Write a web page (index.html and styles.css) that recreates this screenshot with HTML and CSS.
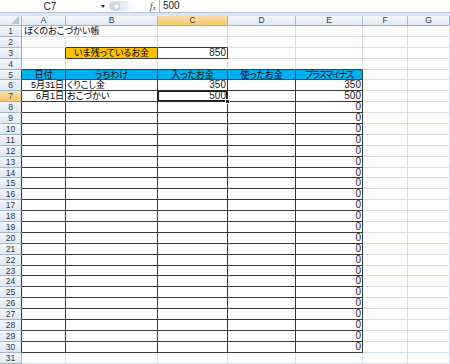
FILE: index.html
```html
<!DOCTYPE html>
<html lang="ja">
<head>
    <meta charset="UTF-8">
    <title>ぼくのおこづかい帳</title>
    <link rel="stylesheet" href="styles.css">
</head>
<body>
    <!-- Formula bar -->
    <div class="formula-bar">
        <div class="name-box">C7</div>
        <div class="name-arrow"></div>
        <div class="grip"><span class="grip-dot"></span></div>
        <div class="fx"><i>f</i><small>x</small></div>
        <div class="formula">500</div>
    </div>
    <div class="band"></div>

    <!-- Worksheet -->
    <div class="sheet" id="sheet">
        <div class="corner"><svg width="8" height="8" viewBox="0 0 8 8"><polygon points="8,0 8,8 0,8" fill="#b6c6da"/></svg></div>
        <div class="ch">A</div>
        <div class="ch">B</div>
        <div class="ch sel">C</div>
        <div class="ch">D</div>
        <div class="ch">E</div>
        <div class="ch">F</div>
        <div class="ch">G</div>

        <div class="rh">1</div>
        <div class="c title">ぼくのおこづかい帳</div>
        <div class="c"></div><div class="c"></div><div class="c"></div><div class="c"></div><div class="c"></div>

        <div class="rh">2</div>
        <div class="c"></div><div class="c bb"></div><div class="c bb"></div>
        <div class="c"></div><div class="c"></div><div class="c"></div><div class="c"></div>

        <div class="rh">3</div>
        <div class="c br"></div>
        <div class="c t gold ctr">いま残っているお金</div>
        <div class="c t r n">850</div>
        <div class="c"></div><div class="c"></div><div class="c"></div><div class="c"></div>

        <div class="rh">4</div>
        <div class="c bb"></div><div class="c bb"></div><div class="c bb"></div><div class="c bb"></div><div class="c bb"></div>
        <div class="c"></div><div class="c"></div>

        <div class="rh rt">5</div>
        <div class="c t head">日付</div>
        <div class="c t head">うちわけ</div>
        <div class="c t head">入ったお金</div>
        <div class="c t head">使ったお金</div>
        <div class="c t head narrow">プラスマイナス</div>
        <div class="c"></div><div class="c"></div>

        <div class="rh rt">6</div>
        <div class="c t r">5月31日</div>
        <div class="c t">くりこし金</div>
        <div class="c t r n">350</div>
        <div class="c t"></div>
        <div class="c t r n">350</div>
        <div class="c"></div><div class="c"></div>

        <div class="rh rt sel">7</div>
        <div class="c t r">6月1日</div>
        <div class="c t">おこづかい</div>
        <div class="c t r n active">500</div>
        <div class="c t"></div>
        <div class="c t r n">500</div>
        <div class="c"></div><div class="c"></div>
    </div>

    <script>
        // Empty rows of the ledger, 8 to 31
        const sheet = document.getElementById('sheet');
        for (let r = 8; r <= 31; r++) {
            const t = r <= 30 ? ' t' : '';
            let html = '<div class="rh' + (r <= 30 ? ' rt' : '') + '">' + r + '</div>';
            html += '<div class="c' + t + '"></div>';
            html += '<div class="c' + t + '"></div>';
            html += '<div class="c' + t + '"></div>';
            html += '<div class="c' + t + '"></div>';
            html += '<div class="c r n' + t + '">' + (r <= 30 ? '0' : '') + '</div>';
            html += '<div class="c"></div><div class="c"></div>';
            sheet.insertAdjacentHTML('beforeend', html);
        }
    </script>
</body>
</html>
```

FILE: styles.css
```css
body {
    margin: 0;
    background: #fff;
    font-family: "Liberation Sans", "Noto Sans CJK JP", sans-serif;
    overflow: hidden;
}
.formula-bar {
    display: flex;
    align-items: center;
    height: 12px;
    border-bottom: 1px solid #b4c4d8;
    font-size: 10px;
    color: #222;
}
.name-box {
    width: 100px;
    text-align: center;
}
.name-arrow {
    width: 0;
    height: 0;
    margin: 0 4px 0 1px;
    border-left: 2px solid transparent;
    border-right: 2px solid transparent;
    border-top: 3px solid #222;
}
.grip {
    width: 26px;
    height: 10px;
    border-radius: 5px 0 0 5px;
    background: linear-gradient(90deg, #c9d5e4, #e8eef6 60%, #fff);
    display: flex;
    align-items: center;
    padding-left: 4px;
    box-sizing: border-box;
}
.grip-dot {
    width: 5px;
    height: 5px;
    border-radius: 50%;
    background: #fff;
    border: 1px solid #a9b9cc;
}
.fx {
    width: 21px;
    text-align: right;
    padding-right: 3px;
    font-family: "Liberation Serif", serif;
    font-size: 10px;
    color: #555;
}
.fx small {
    font-size: 7px;
}
.formula {
    flex: 1;
    height: 12px;
    line-height: 12px;
    border-left: 1px solid #a8b8cc;
    padding-left: 3px;
}
.band {
    height: 3px;
    background: #dbe5f3;
}
.sheet {
    display: grid;
    grid-template-columns: 22px 44px 92px 70px 68px 67px 45px 42px;
    grid-template-rows: 10px repeat(31, 10.9px);
    font-size: 9px;
    line-height: 10px;
    color: #000;
    font-feature-settings: "palt";
}
.sheet > div {
    box-sizing: border-box;
    white-space: nowrap;
}
.corner, .ch, .rh {
    background: linear-gradient(#f4f7fb, #dfe7f2);
    border-right: 1px solid #9eb6ce;
    border-bottom: 1px solid #9eb6ce;
    color: #2e3a4a;
    font-size: 8.5px;
    text-align: center;
}
.corner {
    display: flex;
    align-items: flex-end;
    justify-content: flex-end;
    padding: 0 2px 1px 0;
}
.corner svg {
    display: block;
}
.ch {
    line-height: 9px;
}
.rh {
    line-height: 10px;
}
.ch.sel, .rh.sel {
    background: linear-gradient(#fbe0ac, #f5c46c);
    border-color: #e2a64d;
}
.rh.rt {
    border-right-color: #3a3a3a;
}
.c {
    border-right: 1px solid #d6dde8;
    border-bottom: 1px solid #d6dde8;
    padding: 0 1px;
}
.title {
    grid-column: span 2;
    padding-left: 2px;
}
.bb {
    border-bottom-color: #3a3a3a;
}
.br {
    border-right-color: #3a3a3a;
}
.t {
    border-right-color: #3a3a3a;
    border-bottom-color: #3a3a3a;
}
.r {
    text-align: right;
}
.n {
    font-size: 10px;
    color: #222;
}
.ctr {
    text-align: center;
}
.gold {
    background: #ffc000;
}
.head {
    background: #00b0f0;
    text-align: center;
}
.narrow {
    letter-spacing: -1.2px;
}
.active {
    position: relative;
}
.active::after {
    content: "";
    position: absolute;
    left: -1px;
    top: -1px;
    right: -1px;
    bottom: -1px;
    border: 2px solid #222;
}
.active::before {
    content: "";
    position: absolute;
    right: -3px;
    bottom: -3px;
    width: 3px;
    height: 3px;
    background: #222;
    border: 1px solid #fff;
    z-index: 1;
}
```
